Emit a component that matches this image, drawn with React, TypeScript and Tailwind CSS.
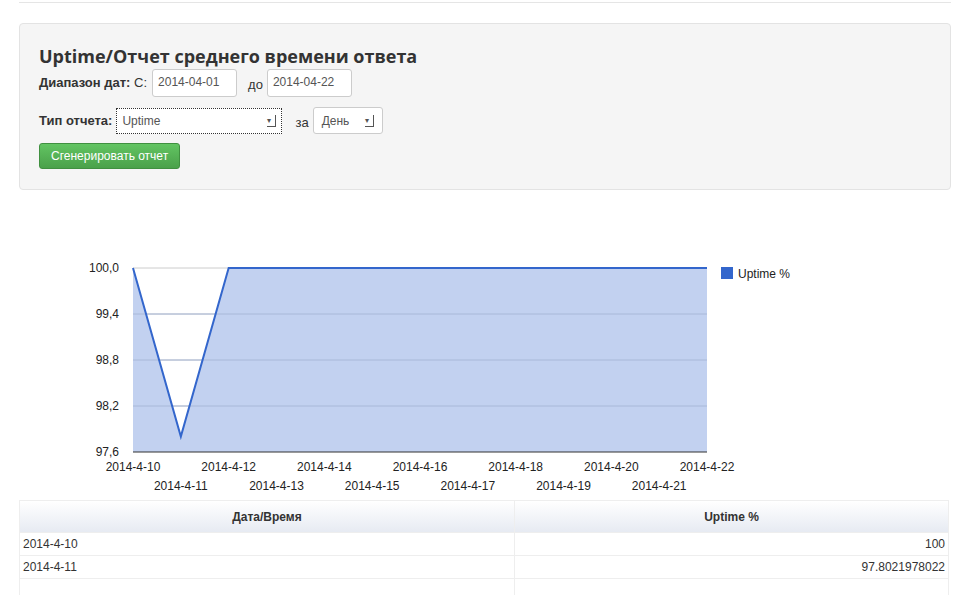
import React from "react";

const X0 = 133, X1 = 707, Y0 = 268, Y1 = 452;
const vals = [100, 97.8021978022, 100, 100, 100, 100, 100, 100, 100, 100, 100, 100, 100];
const px = (i: number) => X0 + (i * (X1 - X0)) / 12;
const py = (v: number) => Y0 + ((100 - v) / 2.4) * (Y1 - Y0);

function Chart() {
  const pts = vals.map((v, i) => `${px(i)},${py(v)}`).join(" ");
  const f = { fontFamily: "Arial, 'Liberation Sans', sans-serif", fontSize: 12, fill: "#222" };
  return (
    <svg width="970" height="300" viewBox="0 200 970 300" className="block">
      {[268, 314, 360, 406].map((y) => (
        <line key={y} x1={X0} x2={X1} y1={y} y2={y} stroke="#ccc" />
      ))}
      <polygon points={`${X0},${Y1} ${pts} ${X1},${Y1}`} fill="#c2d1f0" />
      {[314, 360, 406].map((y) => (
        <line key={y} x1={X0} x2={X1} y1={y} y2={y} stroke="#a8b8d8" />
      ))}
      <polyline points={pts} fill="none" stroke="#3366cc" strokeWidth="2" />
      <line x1={X0} x2={X1} y1={Y1} y2={Y1} stroke="#333" />
      {["100,0", "99,4", "98,8", "98,2", "97,6"].map((t, i) => (
        <text key={t} x={119} y={272 + i * 46} textAnchor="end" {...f}>{t}</text>
      ))}
      {Array.from({ length: 13 }, (_, i) => (
        <text key={i} x={px(i)} y={i % 2 === 0 ? 471 : 490} textAnchor="middle" {...f}>{`2014-4-${10 + i}`}</text>
      ))}
      <rect x="721" y="267" width="12" height="12" fill="#3366cc" />
      <text x="738" y="278" {...f}>Uptime %</text>
    </svg>
  );
}

export default function App() {
  const sans = { fontFamily: "Arial, 'Liberation Sans', sans-serif" };
  return (
    <div className="w-[970px] h-[595px] overflow-hidden bg-white text-[#333]" style={sans}>
      <div className="mx-[19px] h-[3px] border-b border-[#e5e5e5]" />
      <div className="mx-[19px] mt-[20px] h-[167px] bg-[#f5f5f5] border border-[#e3e3e3] rounded-[4px] px-[19px] pt-[20px]">
        <h2 className="text-[18px] font-bold text-[#333] leading-[24px]" style={{ fontFamily: "'Open Sans', sans-serif" }}>
          Uptime/Отчет среднего времени ответа
        </h2>
        <div className="flex items-center text-[13px] mt-[1px]">
          <b>Диапазон дат:</b>&nbsp;С:
          <div className="ml-[5px] w-[85px] h-[28px] bg-white border border-[#ccc] rounded-[3px] px-[5px] pt-[3px] text-[12px] text-[#555]">2014-04-01</div>
          <span className="ml-[11px] mt-[3px]">до</span>
          <div className="ml-[4px] w-[85px] h-[28px] bg-white border border-[#ccc] rounded-[3px] px-[5px] pt-[3px] text-[12px] text-[#555]">2014-04-22</div>
        </div>
        <div className="flex items-center text-[13px] mt-[10px]">
          <b>Тип отчета:</b>
          <div className="ml-[4px] w-[166px] h-[26px] bg-white border border-dotted border-[#333] px-[5px] flex items-center justify-between text-[12px] text-[#555]">
            Uptime<span className="w-[9px] h-[12px] border-r border-b border-[#555] text-[8px] leading-[12px]">▾</span>
          </div>
          <span className="ml-[13px] mt-[4px]">за</span>
          <div className="ml-[4px] w-[70px] h-[27px] bg-white border border-[#ccc] rounded-[3px] px-[8px] flex items-center justify-between text-[12px] text-[#555]">
            День<span className="w-[9px] h-[12px] border-r border-b border-[#555] text-[8px] leading-[12px]">▾</span>
          </div>
        </div>
        <button className="mt-[9px] h-[26px] px-[11px] rounded-[3px] text-white text-[12px] bg-gradient-to-b from-[#62c462] to-[#4aa14a] border border-[#409040]">
          Сгенерировать отчет
        </button>
      </div>
      <div className="mt-[10px]"><Chart /></div>
      <table className="mx-[19px] w-[930px] text-[12px] border-collapse">
        <thead>
          <tr className="h-[32px] bg-gradient-to-b from-white to-[#e6eaf2]">
            <th className="border border-[#eee] font-bold">Дата/Время</th>
            <th className="border border-[#eee] font-bold w-[434px]">Uptime %</th>
          </tr>
        </thead>
        <tbody>
          <tr className="h-[23px]"><td className="border border-[#eee] px-[3px]">2014-4-10</td><td className="border border-[#eee] px-[3px] text-right">100</td></tr>
          <tr className="h-[23px]"><td className="border border-[#eee] px-[3px]">2014-4-11</td><td className="border border-[#eee] px-[3px] text-right">97.8021978022</td></tr>
          <tr className="h-[23px]"><td className="border border-[#eee]"></td><td className="border border-[#eee]"></td></tr>
        </tbody>
      </table>
    </div>
  );
}
